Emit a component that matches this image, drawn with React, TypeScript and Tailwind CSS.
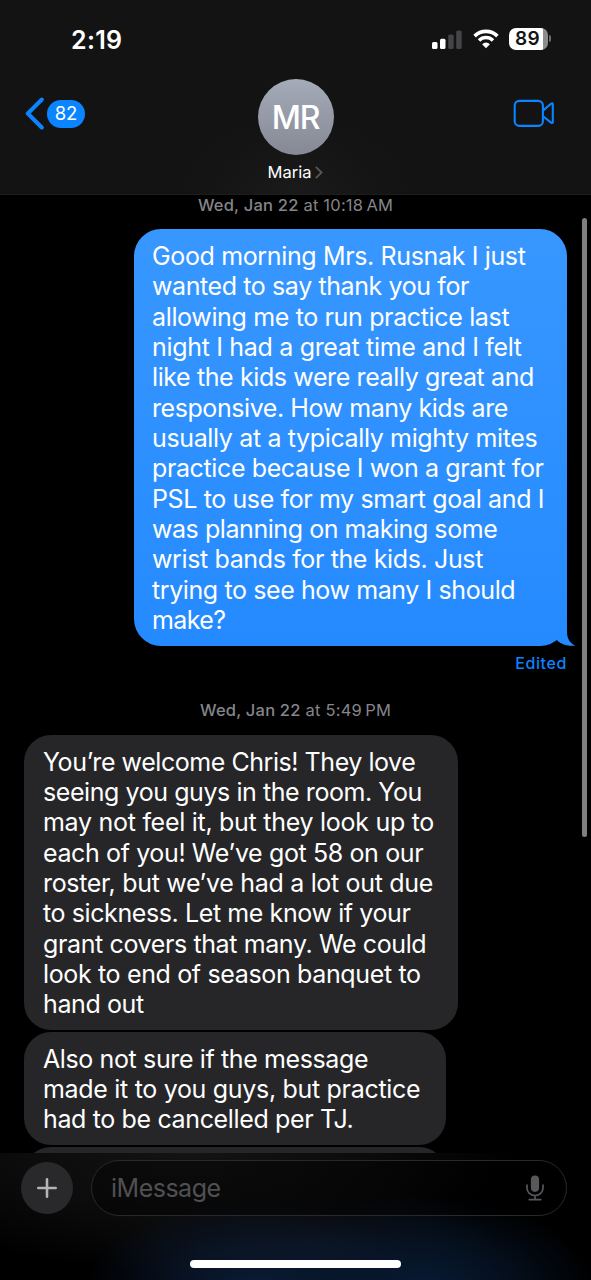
type Line = { text: string; tracking: string };

const sent: Line[] = [
  { text: 'Good morning Mrs. Rusnak I just', tracking: 'tracking-[-0.36px]' },
  { text: 'wanted to say thank you for', tracking: 'tracking-[-0.4px]' },
  { text: 'allowing me to run practice last', tracking: 'tracking-[-0.35px]' },
  { text: 'night I had a great time and I felt', tracking: 'tracking-[-0.32px]' },
  { text: 'like the kids were really great and', tracking: 'tracking-[-0.39px]' },
  { text: 'responsive. How many kids are', tracking: 'tracking-[-0.43px]' },
  { text: 'usually at a typically mighty mites', tracking: 'tracking-[-0.36px]' },
  { text: 'practice because I won a grant for', tracking: 'tracking-[-0.38px]' },
  { text: 'PSL to use for my smart goal and I', tracking: 'tracking-[-0.38px]' },
  { text: 'was planning on making some', tracking: 'tracking-[-0.44px]' },
  { text: 'wrist bands for the kids. Just', tracking: 'tracking-[-0.37px]' },
  { text: 'trying to see how many I should', tracking: 'tracking-[-0.4px]' },
  { text: 'make?', tracking: 'tracking-[-0.6px]' },
];

const welcome: Line[] = [
  { text: 'You’re welcome Chris! They love', tracking: 'tracking-[-0.45px]' },
  { text: 'seeing you guys in the room. You', tracking: 'tracking-[-0.43px]' },
  { text: 'may not feel it, but they look up to', tracking: 'tracking-[-0.28px]' },
  { text: 'each of you! We’ve got 58 on our', tracking: 'tracking-[-0.38px]' },
  { text: 'roster, but we’ve had a lot out due', tracking: 'tracking-[-0.32px]' },
  { text: 'to sickness. Let me know if your', tracking: 'tracking-[-0.4px]' },
  { text: 'grant covers that many. We could', tracking: 'tracking-[-0.38px]' },
  { text: 'look to end of season banquet to', tracking: 'tracking-[-0.35px]' },
  { text: 'hand out', tracking: 'tracking-[-0.4px]' },
];

const cancelled: Line[] = [
  { text: 'Also not sure if the message', tracking: 'tracking-[-0.38px]' },
  { text: 'made it to you guys, but practice', tracking: 'tracking-[-0.31px]' },
  { text: 'had to be cancelled per TJ.', tracking: 'tracking-[-0.36px]' },
];

function Lines({ lines }: { lines: Line[] }) {
  return (
    <>
      {lines.map((line) => (
        <p key={line.text} className={`whitespace-nowrap ${line.tracking}`}>
          {line.text}
        </p>
      ))}
    </>
  );
}

function StatusBar() {
  return (
    <div className="flex h-[79px] items-center justify-between pl-[71px] pr-10">
      <span className="pt-[2px] text-[25px] font-semibold leading-none tracking-[0.3px]">2:19</span>
      <div className="flex items-center">
        <svg width="30" height="20" viewBox="0 0 30 20">
          <rect x="0" y="12" width="5.5" height="7" rx="1.5" fill="#fff" />
          <rect x="8" y="8.7" width="5.5" height="10.3" rx="1.5" fill="#fff" />
          <rect x="16.2" y="4.5" width="5.5" height="14.5" rx="1.5" fill="#444446" />
          <rect x="24.2" y="0.5" width="5.5" height="18.5" rx="1.5" fill="#444446" />
        </svg>
        <svg className="mb-[2px] ml-[11px]" width="26" height="20" viewBox="0 0 26 20" fill="none" stroke="#fff">
          <path d="M1.6 7.1a16.2 16.2 0 0 1 22.8 0" strokeWidth="3.7" />
          <path d="M6 11.5a9.9 9.9 0 0 1 14 0" strokeWidth="3.5" />
          <path d="M13 19.2l-3.9-4a5.6 5.6 0 0 1 7.8 0z" fill="#fff" stroke="none" />
        </svg>
        <div className="mb-[2px] ml-[10px] flex h-[22px] w-[39px] items-center justify-center rounded-[7px] bg-[linear-gradient(90deg,#fff_0_34px,#8c8c8d_34px)]">
          <span className="-ml-px text-[19px] font-semibold leading-none tracking-[0.3px] text-[#141414]">89</span>
        </div>
        <span className="mb-[2px] ml-[1px] h-[7px] w-[2.5px] rounded-r-full bg-[#6d6d6e]" />
      </div>
    </div>
  );
}

function Header() {
  return (
    <header className="h-[195px] shrink-0 border-b border-[#1d1d1e] bg-[#131313] bg-[radial-gradient(ellipse_110px_75px_at_50%_100%,#1a1a1a,#131313)]">
      <StatusBar />
      <div className="grid grid-cols-3 items-start">
        <div className="flex items-center pl-[25px] pt-[18px]">
          <svg width="20" height="33" viewBox="0 0 20 33" fill="none" stroke="#0a84ff" strokeWidth="4" strokeLinecap="round" strokeLinejoin="round">
            <path d="M16.8 2.5L2.8 16.5L16.8 30.5" />
          </svg>
          <span className="ml-[2px] flex h-7 w-[38px] items-center justify-center rounded-full bg-[#0a84ff] text-[18.5px]">82</span>
        </div>
        <div className="flex flex-col items-center">
          <div className="flex size-[76px] items-center justify-center rounded-full bg-linear-to-b from-[#a5abb9] to-[#858994]">
            <span className="pt-[2px] text-[32px] font-medium leading-none tracking-[-1.2px]">MR</span>
          </div>
          <div className="mt-[6px] flex items-center gap-[4px] text-[16.5px] leading-[22px]">
            Maria
            <svg width="8" height="13" viewBox="0 0 8 13" fill="none" stroke="#57575a" strokeWidth="1.8" strokeLinecap="round" strokeLinejoin="round">
              <path d="M1.3 1.3L6.6 6.5L1.3 11.7" />
            </svg>
          </div>
        </div>
        <div className="flex justify-end pr-[36px] pt-[20px]">
          <svg width="42" height="28" viewBox="0 0 42 28" fill="none" stroke="#0a84ff" strokeWidth="2.1" strokeLinejoin="round">
            <rect x="1.7" y="1.9" width="28.2" height="25" rx="4.6" />
            <path d="M30 11.6L38 4.7Q39.8 3.5 39.8 5.4V22.9Q39.8 24.8 38 23.6L30 17.2" />
          </svg>
        </div>
      </div>
    </header>
  );
}

function Stamp({ day, time }: { day: string; time: string }) {
  return (
    <div className="text-center text-[16.5px] leading-5 tracking-[0.21px] text-[#85858a]">
      <span className="font-medium">{day}</span> at {time}
    </div>
  );
}

function Thread() {
  return (
    <main className="relative flex h-[958px] shrink-0 flex-col overflow-hidden bg-black text-[25px] leading-[30.33px]">
      <Stamp day="Wed, Jan 22" time={'10:18\u2009AM'} />
      <div className="relative mr-6 mt-[14px] h-[417px] w-[433px] shrink-0 self-end rounded-[27px] bg-linear-to-b from-[#3897ff] to-[#248aff] pl-[18px] pt-[12px]">
        <Lines lines={sent} />
        <svg className="absolute bottom-0 -right-[9px]" width="20" height="28" viewBox="0 0 20 28" fill="#248aff">
          <path d="M0 18L11 0V14C11 20.5 14 25.5 19.5 27.7C12 28.3 5 26.5 1 22.3Z" />
        </svg>
      </div>
      <div className="mr-6 mt-[7px] self-end text-[16px] font-medium leading-5 tracking-[0.6px] text-[#0a84ff]">Edited</div>
      <div className="mt-[27px]">
        <Stamp day="Wed, Jan 22" time={'5:49\u2009PM'} />
      </div>
      <div className="ml-6 mt-[15px] h-[295px] w-[434px] shrink-0 rounded-[27px] bg-[#262628] pl-[19px] pt-[11.6px]">
        <Lines lines={welcome} />
      </div>
      <div className="ml-6 mt-[2px] h-[113px] w-[422px] shrink-0 rounded-[27px] bg-[#262628] pl-[19px] pt-[11.6px]">
        <Lines lines={cancelled} />
      </div>
      <div className="ml-6 mt-[2px] h-[60px] w-[422px] shrink-0 rounded-[27px] bg-[#262628]" />
      <div className="absolute right-[4px] top-[23px] h-[619px] w-[5px] rounded-full bg-[#7f7f7f]" />
    </main>
  );
}

function Composer() {
  return (
    <footer className="flex h-[127px] shrink-0 flex-col bg-black bg-[radial-gradient(ellipse_170px_85px_at_43%_108%,#0a1c36,#0a1c3699_45%,transparent),radial-gradient(ellipse_170px_95px_at_72%_108%,#081b35,#081b3599_45%,transparent),radial-gradient(ellipse_200px_60px_at_50%_70%,#0c0e14,transparent),radial-gradient(ellipse_330px_120px_at_32%_0%,#131313,#0c0c0c_50%,transparent)]">
      <div className="flex items-center pl-[21px] pr-6 pt-[7px]">
        <button className="flex size-[52px] items-center justify-center rounded-full bg-[#29292b]">
          <svg width="20" height="20" viewBox="0 0 20 20" stroke="#b4b4b6" strokeWidth="2.6" strokeLinecap="round">
            <path d="M10 1.3V18.7M1.3 10H18.7" />
          </svg>
        </button>
        <div className="ml-[18px] flex h-14 flex-1 items-center justify-between rounded-full border-[1.5px] border-[#29292a] bg-black/35 pl-[19px] pr-[22px]">
          <span className="pt-px text-[25px] leading-none tracking-[-0.5px] text-[#505053]">iMessage</span>
          <svg width="18" height="26" viewBox="0 0 18 26" fill="none" stroke="#58585b" strokeWidth="1.7" strokeLinecap="round">
            <rect x="4.9" y="0.5" width="8.2" height="16.4" rx="4.1" fill="#58585b" stroke="none" />
            <path d="M1 10.2V13a8 7.6 0 0 0 16 0V10.2M9 20.6V24.5M3.3 24.6H14.7" />
          </svg>
        </div>
      </div>
      <div className="mx-auto mt-11 h-2 w-[211px] rounded-full bg-white" />
    </footer>
  );
}

export default function App() {
  return (
    <div className="flex h-[1280px] w-[591px] flex-col overflow-hidden bg-black font-[Inter,'Liberation_Sans',sans-serif] text-white">
      <Header />
      <Thread />
      <Composer />
    </div>
  );
}
